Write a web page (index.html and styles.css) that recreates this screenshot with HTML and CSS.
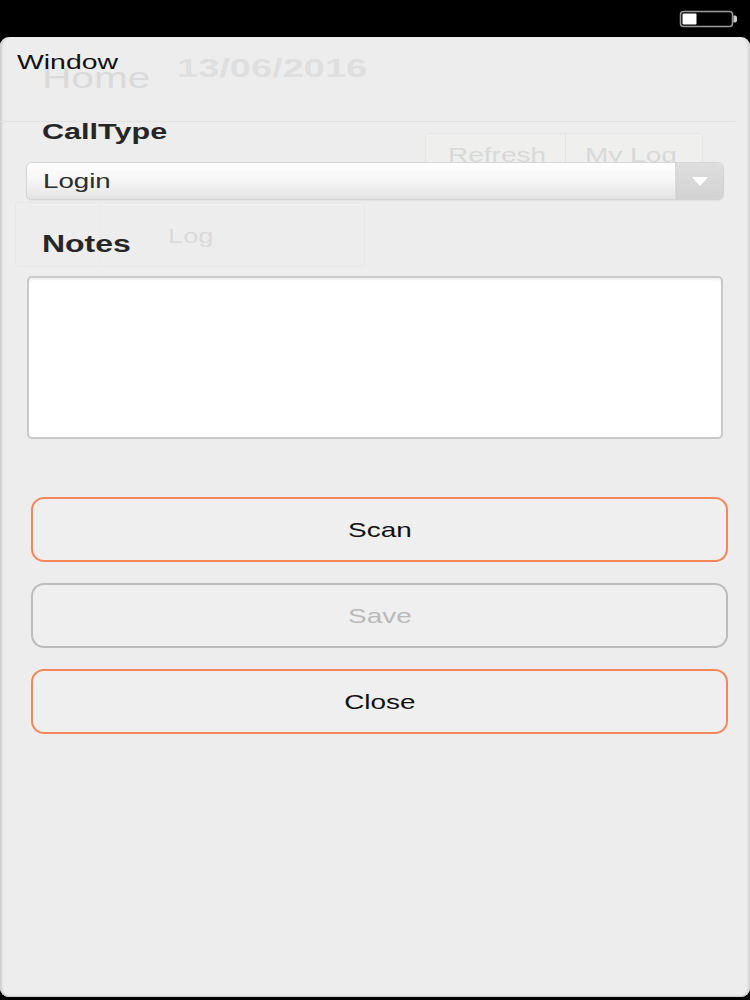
FILE: index.html
```html
<!DOCTYPE html>
<html>
<head>
<meta charset="utf-8">
<link rel="stylesheet" href="styles.css">
</head>
<body>
<div class="statusbar">
  <svg class="battery" width="60" height="20" viewBox="0 0 60 20">
    <rect x="1.5" y="1.5" width="52" height="15" rx="3" ry="3" fill="none" stroke="#9a9a9a" stroke-width="1.5"/>
    <rect x="3.5" y="3.5" width="14" height="11" rx="1" fill="#ffffff"/>
    <path d="M54.5 5.5 h1.5 a2 2 0 0 1 2 2 v3 a2 2 0 0 1 -2 2 h-1.5 z" fill="#cfcfcf"/>
  </svg>
</div>
<div class="panel">
  <div class="ghost">
    <span class="g-home wide">Home</span>
    <span class="g-date wide">13/06/2016</span>
    <div class="g-line"></div>
    <div class="g-btns">
      <div class="g-btn"><span class="wide">Refresh</span></div>
      <div class="g-btn"><span class="wide">My Log</span></div>
    </div>
    <div class="g-log">
      <div class="g-log-cell"></div>
      <div class="g-log-cell main"><span class="wide">Log</span></div>
    </div>
  </div>
  <div class="content">
    <div class="title"><span class="wide">Window</span></div>
    <div class="label label-calltype"><span class="wide">CallType</span></div>
    <div class="select">
      <div class="select-value"><span class="wide">Login</span></div>
      <div class="select-arrow"><svg width="16" height="9" viewBox="0 0 16 9"><path d="M0 0 H16 L8 9 Z" fill="#ffffff"/></svg></div>
    </div>
    <div class="label label-notes"><span class="wide">Notes</span></div>
    <div class="notes"></div>
    <div class="buttons">
      <div class="btn btn-orange"><span class="wide-c">Scan</span></div>
      <div class="btn btn-disabled"><span class="wide-c">Save</span></div>
      <div class="btn btn-orange"><span class="wide-c">Close</span></div>
    </div>
  </div>
</div>
</body>
</html>
```
FILE: styles.css
```css
html, body {
  margin: 0;
  padding: 0;
  background: #000;
}
body {
  width: 750px;
  height: 1000px;
  overflow: hidden;
  font-family: "Liberation Sans", Arial, sans-serif;
  color: #222;
}
.wide {
  display: inline-block;
  transform: scaleX(1.42);
  transform-origin: left center;
  white-space: nowrap;
}
.wide-c {
  display: inline-block;
  transform: scaleX(1.33);
  transform-origin: center center;
  white-space: nowrap;
}
.statusbar {
  height: 37px;
  display: flex;
  justify-content: flex-end;
  align-items: flex-start;
}
.battery {
  margin-top: 9.5px;
  margin-right: 11px;
}
.panel {
  position: relative;
  height: 960px;
  background: #eeeded;
  border-radius: 9px;
  box-shadow: inset 3px 0 2px -1px #cfcfcf, inset -4px 0 3px -2px #d2d2d2, inset 0 -2px 2px -1px #c8c8c8;
  overflow: hidden;
}
/* ghost content behind the modal */
.ghost {
  position: absolute;
  inset: 0;
  color: #dcdcdc;
  pointer-events: none;
}
.g-home {
  position: absolute;
  left: 42px;
  top: 24px;
  font-size: 29px;
  line-height: 34px;
  transform: scaleX(1.4);
  color: #dadada;
}
.g-date {
  position: absolute;
  left: 177px;
  top: 16px;
  font-size: 25px;
  line-height: 30px;
  font-weight: bold;
  transform: scaleX(1.52);
  color: #dfdfdf;
}
.g-line {
  position: absolute;
  left: 0;
  top: 84px;
  width: 735px;
  height: 1px;
  background: #e2e2e2;
}
.g-btns {
  position: absolute;
  left: 425px;
  top: 96px;
  width: 278px;
  height: 44px;
  display: flex;
  border: 1px solid #e6e6e6;
  border-radius: 3px;
  box-sizing: border-box;
  background: #efefed;
}
.g-btn {
  flex: 1;
  display: flex;
  align-items: center;
  padding-left: 22px;
  font-size: 20px;
  color: #d9d9d9;
}
.g-btn + .g-btn {
  border-left: 1px solid #e4e4e4;
  padding-left: 19px;
}
.g-btn .wide { transform: scaleX(1.4); }
.g-log {
  position: absolute;
  left: 15px;
  top: 165px;
  width: 350px;
  height: 65px;
  display: flex;
  border: 1px solid #e7e7e5;
  border-radius: 3px;
  box-sizing: border-box;
}
.g-log-cell {
  width: 84px;
  border-right: 1px solid #e9e9e7;
}
.g-log-cell.main {
  flex: 1;
  border-right: none;
  padding-left: 67px;
  padding-top: 21px;
  font-size: 21px;
  line-height: 24px;
  color: #dadada;
}
.g-log-cell.main .wide { transform: scaleX(1.3); }
/* modal content */
.content {
  position: relative;
  padding-top: 13px;
}
.title {
  padding-left: 17px;
  font-size: 20px;
  line-height: 24px;
  color: #111;
}
.label {
  padding-left: 42px;
  font-weight: bold;
  color: #262626;
}
.label-calltype {
  margin-top: 45px;
  font-size: 22px;
  line-height: 26px;
}
.label-calltype .wide { transform: scaleX(1.39); }
.select {
  margin: 18px 27px 0 27px;
  height: 36px;
  display: flex;
  border-radius: 5px;
  background: linear-gradient(#fefefe 0%, #f7f7f7 45%, #e4e4e4 100%);
  box-shadow: 0 0 0 1px #d4d4d4, 0 1px 2px rgba(0,0,0,0.15);
  overflow: hidden;
}
.select-value {
  flex: 1;
  padding-left: 16px;
  font-size: 19.5px;
  line-height: 36px;
  color: #2b2b2b;
}
.select-arrow {
  width: 47px;
  display: flex;
  align-items: center;
  justify-content: center;
  background: linear-gradient(#dedede, #d2d2d2);
  border-left: 1px solid #d8d8d8;
}
.select-arrow svg {
  margin-top: 1px;
}
.label-notes {
  margin-top: 31px;
  font-size: 23.5px;
  line-height: 28px;
}
.label-notes .wide { transform: scaleX(1.36); }
.notes {
  margin: 18px 27px 0 27px;
  height: 163px;
  box-sizing: border-box;
  background: #fff;
  border: 2px solid #c9c9c9;
  border-radius: 5px;
  box-shadow: inset 0 2px 2px rgba(0,0,0,0.06);
}
.buttons {
  margin: 58px 22px 0 31px;
  display: flex;
  flex-direction: column;
  gap: 21px;
}
.btn {
  height: 65px;
  box-sizing: border-box;
  border-radius: 13px;
  display: flex;
  align-items: center;
  justify-content: center;
  font-size: 21px;
  padding-top: 1px;
  background: #efefef;
}
.btn-orange {
  border: 2px solid #f4875a;
  color: #111;
}
.btn-disabled {
  border: 2px solid #bcbcbc;
  color: #b9b9b9;
}
```
